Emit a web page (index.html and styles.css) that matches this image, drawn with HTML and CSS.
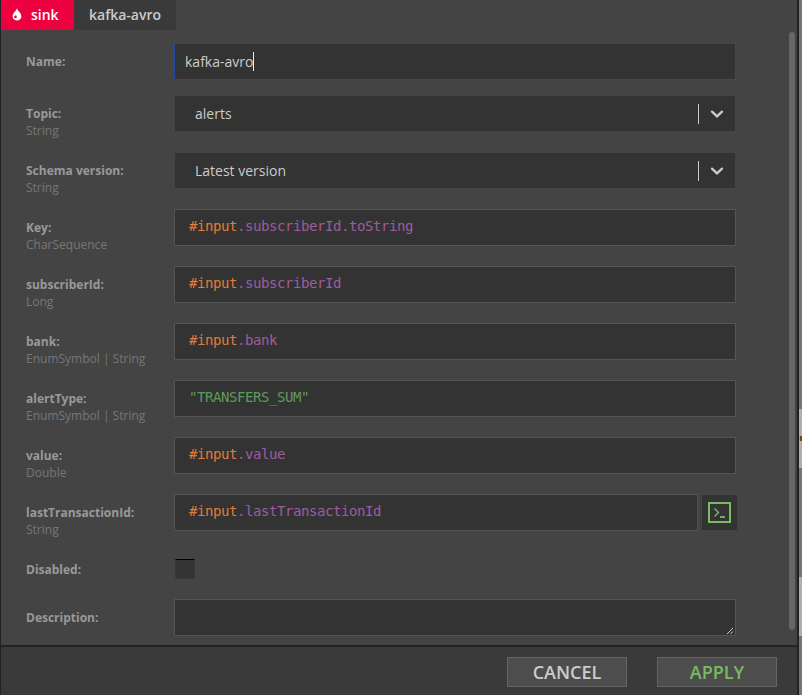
FILE: index.html
```html
<!DOCTYPE html>
<html lang="en">
<head>
<meta charset="utf-8">
<title>kafka-avro</title>
<link rel="stylesheet" href="styles.css">
</head>
<body>
<div class="window">
  <header class="tabs">
    <div class="tab tab-type"><svg width="10" height="13" viewBox="0 0 10 13"><path fill="#fff" fill-rule="evenodd" d="M5 .3C4.2 3 .6 5.2.6 8.4a4.4 4.2 0 0 0 8.8 0C9.4 5.2 5.8 3 5 .3ZM3.5 7.6a1.25 1.25 0 1 1 0 2.6 1.25 1.25 0 0 1 0-2.6Z"/></svg><span>sink</span></div>
    <div class="tab tab-name">kafka-avro</div>
  </header>
  <main class="form">
    <div class="row row-name"><div class="label"><b>Name:</b></div><div class="field focused"><span class="typed">kafka-avro</span></div></div>
    <div class="row"><div class="label"><b>Topic:</b><span>String</span></div><div class="select"><span>alerts</span><i></i><svg width="14" height="10" viewBox="0 0 14 10"><path d="m2 2.6 5 4.8 5-4.8"/></svg></div></div>
    <div class="row"><div class="label"><b>Schema version:</b><span>String</span></div><div class="select"><span>Latest version</span><i></i><svg width="14" height="10" viewBox="0 0 14 10"><path d="m2 2.6 5 4.8 5-4.8"/></svg></div></div>
    <div class="row"><div class="label"><b>Key:</b><span>CharSequence</span></div><div class="field code"><span class="var">#input</span><span class="prop">.subscriberId.toString</span></div></div>
    <div class="row"><div class="label"><b>subscriberId:</b><span>Long</span></div><div class="field code"><span class="var">#input</span><span class="prop">.subscriberId</span></div></div>
    <div class="row"><div class="label"><b>bank:</b><span>EnumSymbol | String</span></div><div class="field code"><span class="var">#input</span><span class="prop">.bank</span></div></div>
    <div class="row"><div class="label"><b>alertType:</b><span>EnumSymbol | String</span></div><div class="field code"><span class="str">"TRANSFERS_SUM"</span></div></div>
    <div class="row"><div class="label"><b>value:</b><span>Double</span></div><div class="field code"><span class="var">#input</span><span class="prop">.value</span></div></div>
    <div class="row row-last"><div class="label"><b>lastTransactionId:</b><span>String</span></div><div class="field code short"><span class="var">#input</span><span class="prop">.lastTransactionId</span></div><div class="raw"><svg width="23" height="21" viewBox="0 0 23 21"><rect x="1" y="1" width="21" height="19" stroke-width="2"/><path d="m6.5 6.5 4 4-4 4" stroke-width="1.4"/><path d="M12 15h5" stroke-width="1.8"/></svg></div></div>
    <div class="row row-check"><div class="label"><b>Disabled:</b></div><div class="check"></div></div>
    <div class="row row-desc"><div class="label"><b>Description:</b></div><div class="field area"><svg width="8" height="8" viewBox="0 0 8 8"><path d="m1 7 6-6M4.500 7 7 4.500"/></svg></div></div>
  </main>
  <footer class="actions"><div class="button">CANCEL</div><div class="button apply">APPLY</div></footer>
  <div class="scrollbar"></div>
</div>
<div class="backdrop"><div class="node node-marked"></div><div class="node"></div></div>
</body>
</html>
```
FILE: styles.css
```css
* { box-sizing: border-box; }
body {
  margin: 0;
  height: 695px;
  display: flex;
  overflow: hidden;
  background: #777573;
  font-family: "Open Sans", sans-serif;
}
.window {
  position: relative;
  width: 799px;
  height: 695px;
  display: flex;
  flex-direction: column;
  background: #444;
  border-left: 1px solid #222;
  border-right: 2px solid #222;
}
.tabs { display: flex; height: 30px; flex: none; }
.tab {
  display: flex;
  align-items: center;
  padding-bottom: 2px;
  font-size: 14px;
  font-weight: 600;
}
.tab-type { width: 73px; padding-left: 11px; gap: 9px; background: #ed0040; color: #fff; }
.tab-type svg { margin-top: 1px; }
.tab-name { width: 102px; padding-left: 15px; background: #3a3a3a; color: #ccc; }

.form { height: 615px; padding: 14px 0 0 25px; }
.row { display: flex; align-items: flex-start; height: 57px; }
.row-name { height: 52px; }
.row-last { height: 64px; }
.row-check { height: 41px; }
.label {
  width: 149px;
  padding-top: 9px;
  font-size: 12px;
  line-height: 17px;
  color: #999;
  white-space: nowrap;
}
.label b, .label span { display: block; }
.label span { color: #777; }
.row-check .label { padding-top: 2px; }
.field, .select { width: 560px; height: 35px; background: #333; }
.field { outline: 1px solid #555; }
.focused {
  display: flex;
  align-items: center;
  padding-left: 10px;
  outline-color: #2747a5;
  color: #ccc;
  font-size: 14px;
}
.typed { border-right: 1px solid #eee; line-height: 19px; }
.select {
  display: flex;
  align-items: center;
  padding: 0 11px 0 20px;
  color: #ccc;
  font-size: 14px;
}
.select span { flex: 1; }
.select i { width: 1px; height: 20px; margin-right: 11px; background: #ccc; }
.select svg { fill: none; stroke: #ccc; stroke-width: 2.3; stroke-linecap: round; margin-top: 1px; }
.code {
  padding: 6px 14px;
  font: 14px/20px "DejaVu Sans Mono", monospace;
  letter-spacing: -0.43px;
  white-space: pre;
}
.var { color: #e07b39; }
.prop { color: #9e5ba1; }
.str { color: #5f9a5c; }
.short { width: 522px; }
.raw {
  display: flex;
  align-items: center;
  justify-content: center;
  width: 35px;
  height: 35px;
  margin-left: 5px;
  background: #333;
}
.raw svg { fill: none; stroke: #7cbb66; }
.check {
  width: 20px;
  height: 20px;
  background: #333;
  border: 1px solid #3a3a3a;
  border-top-color: #000;
}
.area { display: flex; justify-content: flex-end; align-items: flex-end; }
.area svg { fill: none; stroke: #ccc; stroke-width: 1; margin: 0 1px 0 0; }

.actions {
  display: flex;
  justify-content: flex-end;
  gap: 30px;
  height: 50px;
  padding: 10px 20px 0 0;
  background: #3a3a3a;
  border-top: 2px solid #222;
}
.button {
  width: 120px;
  height: 30px;
  border: 1px solid #666;
  background: #4d4d4d;
  color: #ccc;
  font-size: 18px;
  font-weight: 600;
  line-height: 29px;
  text-align: center;
}
.apply { color: #76bd5f; }
.scrollbar {
  position: absolute;
  top: 32px;
  right: 2px;
  width: 6px;
  height: 598px;
  border-radius: 3px;
  background: #666;
}
.backdrop {
  display: flex;
  flex-direction: column;
  gap: 109px;
  width: 3px;
  padding-top: 409px;
}
.node { height: 59px; background: #b0aeac; }
.node-marked { background: linear-gradient(90deg, #8fa0b0 1px, #6b4a25 1px) 0 27px / 3px 5px no-repeat #b0aeac; }
```
